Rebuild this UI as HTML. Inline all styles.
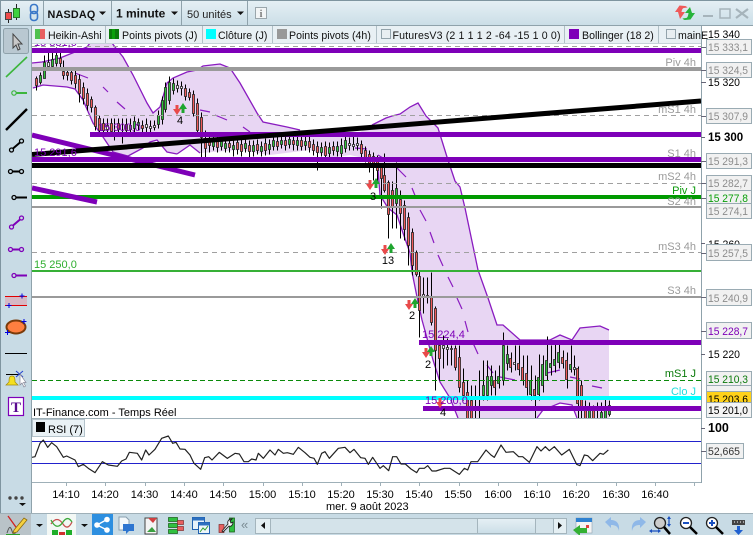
<!DOCTYPE html>
<html><head><meta charset="utf-8"><style>
html,body{margin:0;padding:0;background:#fff}
svg{display:block;font-family:"Liberation Sans",sans-serif}
</style></head><body>
<svg width="753" height="535" viewBox="0 0 753 535" xmlns="http://www.w3.org/2000/svg">
<defs>
<linearGradient id="tb" x1="0" y1="0" x2="0" y2="1"><stop offset="0" stop-color="#e9f3f8"/><stop offset="1" stop-color="#c9dee8"/></linearGradient>
<linearGradient id="th" x1="0" y1="0" x2="0" y2="1"><stop offset="0" stop-color="#e6f0f5"/><stop offset="1" stop-color="#cbdee7"/></linearGradient>
<clipPath id="c"><rect x="32" y="43" width="669" height="375"/></clipPath>
<clipPath id="ct"><rect x="32" y="43" width="669" height="439"/></clipPath>
<path id="dn" d="M-1.5-5h3v4h2.5L0 5-4-1h2.500z"/>
<path id="up" d="M-1.500 5h3V1H4L0-5-4 1h2.500z"/>
</defs>
<rect width="753" height="535" fill="#fff"/>
<!-- chart -->
<g clip-path="url(#c)">
<path fill="#e8d6f3" d="M32 63L42 62 60 58 75 52 87 47 90 43 112 43 115 47 123 57 133 75 147 103 153 113 160 107 167 83 173 78 187 72 197 70 203 66 220 64 230 68 240 83 257 113 263 122 287 127 300 130 330 134 360 132 372 125 386 118 392 116 400 114 410 107 418 103 426 116 438 128 447 157 455 181 460 187 465 208 478 270 488 298 497 325 503 325 520 340 550 340 560 335 572 340 580 328 600 326 609 330 609 418 578 418 572 405 560 403 543 410 537 418 458 418 450 398 440 382 433 360 422 320 417 297 412 272 410 253 403 233 397 215 388 208 380 195 378 170 372 160 350 155 330 158 310 150 270 155 240 150 200 153 190 145 177 154 167 152 157 140 150 142 143 148 128 156 113 152 103 137 100 133 93 123 83 100 75 89 67 87 43 85 33 88 32 90z"/>
<path fill="none" stroke="#8a1cc0" stroke-width="1.300" d="M32 63L42 62 60 58 75 52 87 47 90 43M112 43L115 47 123 57 133 75 147 103 153 113 160 107 167 83 173 78 187 72 197 70 203 66 220 64 230 68 240 83 257 113 263 122 287 127 300 130M372 125L386 118 392 116 400 114 410 107 418 103 426 116 438 128 447 157 455 181 460 187 465 208 478 270 488 298 497 325 503 325 520 340 550 340 560 335 572 340 580 328 600 326 609 330M577 418L572 405 560 403 543 410 537 418M458 418L450 398 440 382 433 360 422 320 417 297 412 272 410 253 403 233 397 215 388 208 380 195 378 170 372 160M177 154L167 152 157 140 150 142 143 148 128 156 113 152 103 137 100 133 93 123 83 100 75 89 67 87 43 85 33 88M177 154L190 145 200 153"/>
<path fill="none" stroke="#8a1cc0" stroke-width="1.200" d="M75 73L88 78M103 87L108 92M117 102L125 109M200 110L210 112M215 115L227 120M243 127L250 132M355 148L367 149M378 155L383 158M397 168L406 177M412 188L416 198M420 210L426 221M430 232L434 243M438 255L443 266M448 277L453 287M457 298L462 309M465 321L468 332M473 343L478 354M487 365L493 373M500 377L515 380M547 373L560 370M570 377L580 379M592 386L602 388"/>
<g transform="translate(.5 .5)">
<path fill="none" stroke="#000" d="M36 76V90M40 72V84M44 55V78M48 52V68M52 50V68M56 47V66M60 50V70M63 60V79M67 68V80M71 68V84M75 70V88M79 74V102M83 82V104M87 88V110M91 96V112M95 105V130M99 115V135M103 118V135M107 118V136M111 118V136M114 118V140M118 118V136M122 118V143M126 118V136M130 118V136M134 116V132M138 118V130M142 120V132M146 118V134M150 120V132M154 120V130M158 110V128M162 96V124M165 82V112M169 76V104M173 78V94M177 80V92M181 81V95M185 84V100M189 88V100M193 90V116M197 98V134M201 112V158M205 130V157M209 134V152M213 136V150M217 136V152M221 137V150M225 138V152M229 138V152M233 140V156M237 138V154M241 138V156M245 138V152M249 140V158M253 140V156M257 139V154M261 141V156M265 138V155M269 139V154M273 135V150M277 136V150M281 135V148M285 135V150M289 134V148M293 135V150M297 135V150M301 135V150M305 136V150M309 136V152M313 139V155M317 141V170M321 142V156M325 141V160M329 142V158M333 141V155M337 141V156M341 138V158M345 136V152M349 137V150M353 135V150M357 137V150M361 140V158M365 146V162M369 150V172M373 152V180M377 155V182M381 163V208M384 153V192M388 180V238M392 181V228M396 162V228M400 190V238M404 200V240M408 212V265M412 228V275M416 250V276M419 270V337M423 277V313M427 277V303M431 272V325M435 306V390M439 340V380M443 335V368M447 338V365M451 345V365M455 345V370M459 345V392M463 368V400M467 380V418M471 385V418M475 385V418M479 370V418M483 360V400M487 360V400M491 365V395M495 370V395M499 365V388M503 332V385M507 345V370M511 352V372M515 345V370M519 345V375M523 355V385M527 355V395M531 365V400M535 375V418M539 354V400M543 355V392M547 336V380M551 345V375M555 342V372M559 340V368M563 350V368M567 352V388M571 345V372M574 355V375M578 366V418M581 380V418M585 400V418M589 402V418M593 405V418M597 402V418M601 402V418M605 398V418M609 400V416"/>
<path fill="#f05a5a" stroke="#222" stroke-width=".8" d="M35 78h2v7h-2zM59 58h2v5h-2zM62 71h2v4h-2zM66 72h2v3h-2zM70 72h2v8h-2zM74 75h2v8h-2zM78 79h2v14h-2zM82 87h2v11h-2zM86 93h2v12h-2zM90 99h2v8h-2zM94 107h2v19h-2zM98 118h2v12h-2zM102 123h2v7h-2zM110 123h2v8h-2zM117 123h2v6h-2zM125 124h2v6h-2zM141 125h2v3h-2zM184 88h2v8h-2zM188 92h2v5h-2zM192 94h2v19h-2zM196 103h2v27h-2zM200 117h2v20h-2zM204 138h2v10h-2zM208 140h2v5h-2zM216 140h2v7h-2zM228 143h2v4h-2zM236 142h2v7h-2zM240 144h2v7h-2zM248 145h2v6h-2zM256 144h2v6h-2zM264 143h2v7h-2zM276 141h2v5h-2zM284 140h2v5h-2zM292 140h2v4h-2zM300 140h2v6h-2zM308 141h2v6h-2zM312 144h2v6h-2zM316 146h2v6h-2zM324 146h2v9h-2zM332 146h2v4h-2zM360 144h2v9h-2zM364 150h2v7h-2zM368 154h2v9h-2zM372 156h2v9h-2zM376 160h2v10h-2zM380 165h2v13h-2zM383 175h2v15h-2zM387 182h2v32h-2zM391 190h2v16h-2zM399 199h2v14h-2zM403 205h2v24h-2zM407 217h2v28h-2zM411 232h2v33h-2zM415 252h2v22h-2zM418 276h2v34h-2zM430 296h2v26h-2zM434 308h2v42h-2zM438 345h2v13h-2zM454 348h2v19h-2zM458 357h2v30h-2zM462 382h2v13h-2zM466 392h2v26h-2zM470 400h2v18h-2zM493 380h2v7h-2zM509 358h2v9h-2zM517 363h2v6h-2zM521 367h2v13h-2zM525 373h2v14h-2zM533 389h2v6h-2zM561 357h2v6h-2zM565 360h2v19h-2zM576 368h2v35h-2zM580 385h2v22h-2zM584 406h2v12h-2zM592 408h2v10h-2z"/>
<path fill="#2fc03a" stroke="#222" stroke-width=".8" d="M39 75h2v7h-2zM43 62h2v16h-2zM51 59h2v7h-2zM55 55h2v8h-2zM133 121h2v7h-2zM137 122h2v3h-2zM157 115h2v9h-2zM161 100h2v19h-2zM164 87h2v22h-2zM168 82h2v18h-2zM172 83h2v7h-2zM212 141h2v5h-2zM220 141h2v5h-2zM224 143h2v5h-2zM232 145h2v4h-2zM244 143h2v5h-2zM252 145h2v6h-2zM260 146h2v5h-2zM268 144h2v5h-2zM272 140h2v6h-2zM280 140h2v4h-2zM288 139h2v5h-2zM296 140h2v5h-2zM304 141h2v4h-2zM320 147h2v5h-2zM328 147h2v6h-2zM336 146h2v5h-2zM340 145h2v8h-2zM344 140h2v8h-2zM395 188h2v15h-2zM482 385h2v10h-2zM486 376h2v19h-2zM490 376h2v9h-2zM497 376h2v7h-2zM502 345h2v35h-2zM506 354h2v9h-2zM529 380h2v14h-2zM537 377h2v17h-2zM541 364h2v21h-2zM545 360h2v15h-2zM549 363h2v4h-2zM553 359h2v6h-2zM557 352h2v10h-2zM569 364h2v5h-2zM588 410h2v8h-2zM600 412h2v6h-2zM604 410h2v8h-2zM608 405h2v9h-2z"/>
<path fill="#f4f0f6" stroke="#222" stroke-width=".8" d="M47 62h2v4h-2zM106 125h2v4h-2zM129 125h2v4h-2zM145 124h2v3h-2zM149 126h2v2h-2zM153 125h2v2h-2zM176 85h2v3h-2zM180 86h2v2h-2zM348 143h2v2h-2zM352 144h2v2h-2zM356 143h2v2h-2zM422 294h2v2h-2zM426 295h2v2h-2zM442 345h2v3h-2zM446 347h2v2h-2zM450 348h2v1h-2zM513 362h2v2h-2zM573 367h2v2h-2z"/>
</g>
<!-- dashed -->
<path stroke="#a0a0a0" stroke-width="1" stroke-dasharray="5 4" fill="none" d="M32 46.500H701M32 115.500H701M32 183.500H701M32 252.500H701"/>
<path stroke="#0a8a0a" stroke-width="1" stroke-dasharray="5 3" fill="none" d="M32 380.500H701"/>
<!-- solid lines -->
<rect x="32" y="67" width="669" height="4" fill="#9a9a9a"/>
<rect x="32" y="206" width="669" height="2" fill="#9a9a9a"/>
<rect x="32" y="296" width="669" height="2" fill="#9a9a9a"/>
<rect x="32" y="270" width="669" height="2" fill="#36b036"/>
<rect x="32" y="195" width="669" height="4" fill="#009a00"/>
<path stroke="#7e00b8" stroke-width="5" d="M32 135L195 175M32 188L97 202"/>
<rect x="32" y="48" width="669" height="5" fill="#7e00b8"/>
<rect x="90" y="132" width="611" height="5" fill="#7e00b8"/>
<rect x="32" y="157" width="669" height="5" fill="#7e00b8"/>
<path stroke="#000" stroke-width="5" d="M32 154.500L701 101"/>
<rect x="32" y="163" width="669" height="5" fill="#000"/>
<rect x="419" y="340" width="282" height="5" fill="#7e00b8"/>
<rect x="32" y="396" width="669" height="4" fill="#00ffff"/>
<rect x="423" y="406" width="278" height="5" fill="#7e00b8"/>
<!-- signals -->
<g fill="#e84a4a"><use href="#dn" x="177" y="110"/><use href="#dn" x="370" y="185"/><use href="#dn" x="385" y="250"/><use href="#dn" x="409" y="305"/><use href="#dn" x="426" y="353"/><use href="#dn" x="440" y="403"/></g>
<g fill="#1fa52f"><use href="#up" x="183" y="108"/><use href="#up" x="376" y="183"/><use href="#up" x="391" y="248"/><use href="#up" x="415" y="303"/><use href="#up" x="431" y="351"/></g>
<g font-size="11" fill="#000" text-anchor="middle"><text x="180" y="124">4</text><text x="373" y="200">3</text><text x="388" y="264">13</text><text x="412" y="319">2</text><text x="428" y="368">2</text><text x="443" y="416">4</text></g>
<g font-size="11" fill="#7e00b8"><text x="34" y="46">15 331,0</text><text x="98" y="131">15 300,0</text><text x="34" y="156">15 291,6</text><text x="422" y="338">15 224,4</text><text x="425" y="404">15 200,0</text></g>
<text x="34" y="268" font-size="11" fill="#2fae2f">15 250,0</text>
<g font-size="11" fill="#9a9a9a" text-anchor="end"><text x="696" y="66">Piv 4h</text><text x="696" y="113">mS1 4h</text><text x="696" y="157">S1 4h</text><text x="696" y="180">mS2 4h</text><text x="696" y="205">S2 4h</text><text x="696" y="250">mS3 4h</text><text x="696" y="294">S3 4h</text></g>
<text x="696" y="194" font-size="11" fill="#0a9a0a" text-anchor="end">Piv J</text>
<text x="696" y="377" font-size="11" fill="#0a7a0a" text-anchor="end">mS1 J</text>
<text x="696" y="395" font-size="11" fill="#22dddd" text-anchor="end">Clo J</text>
</g>
<text x="33" y="416" font-size="11" fill="#000">IT-Finance.com - Temps Réel</text>
<!-- RSI -->
<rect x="32" y="418" width="669" height="1" fill="#9fb0b8"/>
<rect x="32" y="482" width="669" height="1" fill="#9fb0b8"/>
<rect x="32" y="441" width="669" height="1" fill="#2222cc"/>
<rect x="32" y="463" width="669" height="1" fill="#2222cc"/>
<g clip-path="url(#ct)" fill="none" stroke="#222" stroke-linejoin="round">
<path transform="translate(0 405) scale(.33333)" stroke-width="3.600" d="M96 157L105 155 120 115 130 105 143 127 155 113 170 125 190 157 200 153 225 165 235 185 250 178 265 190 285 203 307 170 325 180 352 184 365 168 378 162 388 142 412 145 425 165 437 135 447 150 465 133 485 100 505 93 518 115 528 112 540 132 555 133 570 150 582 175 602 193 614 158 626 155 636 165 658 142 682 160 705 145 718 147 732 170 745 170 755 162 768 165 775 145 790 160 810 135 825 150 835 133 850 145 862 143 880 148 895 127 915 143 930 157 942 160 952 178 965 145 975 140 988 160 1015 130 1035 127 1050 143 1062 133 1082 158 1095 160 1105 178 1118 157 1128 172"/>
<path transform="translate(376 405) scale(.33333)" stroke-width="3.600" d="M0 172L12 190 22 182 38 197 50 155 62 155 75 177 88 177 105 192 122 203 130 190 145 190 155 182 168 198 180 198 205 190 222 190 250 208 265 190 275 195 285 170 305 170 330 135 345 150 355 157 375 120 390 142 412 140 428 155 440 155 460 172 483 125 495 138 508 125 520 137 535 125 557 150 580 133 602 178 612 182 625 150 635 152 650 167 672 145 682 148 697 135"/>
</g>
<rect x="32.500" y="419.500" width="52" height="17" fill="#e9f1f5" stroke="#b4c3cb"/>
<rect x="36" y="422" width="9" height="10" fill="#000"/>
<text x="48" y="433" font-size="11" fill="#000">RSI (7)</text>
<!-- time axis -->
<path stroke="#9fb0b8" fill="none" d="M66.500 482v4M105.500 482v4M145.500 482v4M184.500 482v4M223.500 482v4M263.500 482v4M302.500 482v4M341.500 482v4M380.500 482v4M419.500 482v4M459.500 482v4M498.500 482v4M537.500 482v4M576.500 482v4M616.500 482v4M655.500 482v4M694.500 482v4"/>
<g font-size="11" fill="#000" text-anchor="middle"><text x="66" y="498">14:10</text><text x="105" y="498">14:20</text><text x="144.500" y="498">14:30</text><text x="184" y="498">14:40</text><text x="223" y="498">14:50</text><text x="262.500" y="498">15:00</text><text x="302" y="498">15:10</text><text x="341" y="498">15:20</text><text x="380" y="498">15:30</text><text x="419" y="498">15:40</text><text x="458" y="498">15:50</text><text x="498" y="498">16:00</text><text x="537" y="498">16:10</text><text x="576" y="498">16:20</text><text x="616" y="498">16:30</text><text x="655" y="498">16:40</text></g>
<text x="326" y="510" font-size="11" fill="#000">mer. 9 août 2023</text>
<!-- right axis -->
<rect x="701" y="26" width="1" height="457" fill="#8fa2ab"/>
<path stroke="#667" fill="none" d="M701 35.500h4M701 82.500h5M701 137.500h4M701 243.500h4M701 354.500h4M701 428.500h4M701 451.500h5M701 47.500h5M701 70.500h5M701 116.500h5M701 161.500h5M701 183.500h5M701 198.500h5M701 253.500h5M701 297.500h5M701 331.500h5"/>
<g font-size="11" fill="#000"><text x="708" y="38" textLength="32" lengthAdjust="spacingAndGlyphs">15 340</text><text x="708" y="86" textLength="32" lengthAdjust="spacingAndGlyphs">15 320</text><text x="708" y="248" textLength="32" lengthAdjust="spacingAndGlyphs">15 260</text><text x="708" y="358" textLength="32" lengthAdjust="spacingAndGlyphs">15 220</text></g>
<text x="708" y="141" font-size="11.500" font-weight="bold" fill="#000">15 300</text>
<text x="708" y="432" font-size="12.500" font-weight="bold" fill="#000">100</text>
<g fill="#f1f1f1" stroke="#9aabb3"><rect x="706.500" y="39.500" width="45" height="15"/><rect x="706.500" y="62.500" width="45" height="15"/><rect x="706.500" y="108.500" width="45" height="15"/><rect x="706.500" y="153.500" width="45" height="15"/><rect x="706.500" y="175.500" width="45" height="15"/><rect x="706.500" y="190.500" width="45" height="15"/><rect x="706.500" y="203.500" width="45" height="15"/><rect x="706.500" y="244.500" width="45" height="16"/><rect x="706.500" y="289.500" width="45" height="16"/><rect x="706.500" y="322.500" width="45" height="16"/><rect x="706.500" y="371.500" width="45" height="15"/><rect x="706.500" y="385.500" width="45" height="8"/></g>
<rect x="706.500" y="391.500" width="45" height="11" fill="#ffd21a" stroke="#9aabb3"/>
<rect x="706.500" y="402.500" width="45" height="15" fill="#f4f4f4" stroke="#9aabb3"/>
<rect x="706.500" y="443.500" width="37" height="15" fill="#f1f1f1" stroke="#9aabb3"/>
<g font-size="11" fill="#8c8c8c"><text x="708" y="51" textLength="40" lengthAdjust="spacingAndGlyphs">15 333,1</text><text x="708" y="74" textLength="40" lengthAdjust="spacingAndGlyphs">15 324,5</text><text x="708" y="120" textLength="40" lengthAdjust="spacingAndGlyphs">15 307,9</text><text x="708" y="165" textLength="40" lengthAdjust="spacingAndGlyphs">15 291,3</text><text x="708" y="187" textLength="40" lengthAdjust="spacingAndGlyphs">15 282,7</text><text x="708" y="215" textLength="40" lengthAdjust="spacingAndGlyphs">15 274,1</text><text x="708" y="257" textLength="40" lengthAdjust="spacingAndGlyphs">15 257,5</text><text x="708" y="302" textLength="40" lengthAdjust="spacingAndGlyphs">15 240,9</text></g>
<text x="708" y="202" font-size="11" fill="#0aa00a" textLength="40" lengthAdjust="spacingAndGlyphs">15 277,8</text>
<text x="708" y="335" font-size="11" fill="#7e00b8" textLength="40" lengthAdjust="spacingAndGlyphs">15 228,7</text>
<text x="708" y="383" font-size="11" fill="#0a7a0a" textLength="40" lengthAdjust="spacingAndGlyphs">15 210,3</text>
<svg x="707" y="392" width="44" height="10"><text x="1" y="11" font-size="11" fill="#000" textLength="40" lengthAdjust="spacingAndGlyphs">15 203,6</text></svg>
<text x="708" y="414" font-size="11" fill="#000" textLength="40" lengthAdjust="spacingAndGlyphs">15 201,0</text>
<text x="708" y="455" font-size="11" fill="#333" textLength="32" lengthAdjust="spacingAndGlyphs">52,665</text>
<!-- top toolbar -->
<rect x="0" y="0" width="753" height="25" fill="url(#th)"/>
<rect x="0" y="0" width="753" height="1" fill="#7f95a0"/>
<rect x="0" y="25" width="753" height="1" fill="#8fa2ab"/>
<path stroke="#8fa2ab" d="M43.500 1V25M111.500 1V25M181.500 1V25M247.500 1V25"/>
<path stroke="#222" d="M8.500 9V23M16.500 4V20"/>
<rect x="5.500" y="12.500" width="6" height="7" fill="#ee4b4b" stroke="#444"/>
<rect x="13.500" y="8.500" width="6" height="9" fill="#3fd23f" stroke="#2a7a2a"/>
<g fill="none" stroke="#3a78c8" stroke-width="1.600"><rect x="30.500" y="4.500" width="7" height="9" rx="3"/><rect x="30.500" y="11.500" width="7" height="9" rx="3"/></g>
<text x="47.500" y="18" font-size="10.800" font-weight="bold" fill="#111" letter-spacing=".2">NASDAQ</text>
<path d="M99 11.500h7l-3.500 3.500z" fill="#111"/>
<text x="116" y="17.500" font-size="12" font-weight="bold" fill="#111">1 minute</text>
<path d="M171 11.500h7l-3.500 3.500z" fill="#111"/>
<text x="187" y="18" font-size="11" fill="#222">50 unités</text>
<path d="M237 11.500h7l-3.500 3.500z" fill="#111"/>
<rect x="255.500" y="7.500" width="11" height="11" fill="#f2f5f6" stroke="#9aa6ac"/>
<text x="261" y="17" font-size="10" font-weight="bold" fill="#777" text-anchor="middle" font-family="Liberation Serif">i</text>
<!-- refresh -->
<path d="M678 12l-3 0 4.500-6.500L685 6c1 0 2 1 2.500 1.500L684 8c-1 0-2 1-2.500 4L685 12 680 19z" fill="#ef5a5a"/>
<path d="M692 13l3 0-4.500 6.500L685 20c-1 0-2-1-2.500-1.500L686 18c1 0 2-1 2.500-5L685 13l5-6z" fill="#27b43a"/>
<rect x="703" y="15" width="10" height="2" fill="#a6b4bb"/>
<rect x="720" y="9" width="10" height="9" fill="none" stroke="#a6b4bb" stroke-width="1.500"/>
<path d="M736 9l12 9M748 9l-12 9" stroke="#a6b4bb" stroke-width="2.200"/>
<!-- legend -->
<rect x="32" y="26" width="669" height="17" fill="#e8f0f4"/>
<rect x="32" y="43" width="669" height="1" fill="#c5d2d8"/>
<path stroke="#b0bfc6" d="M105.500 26V43M202.500 26V43M272.500 26V43M564.500 26V43M658.500 26V43M376.500 26V43"/>
<rect x="35" y="29" width="5" height="10" fill="#4fc04f"/><rect x="40" y="29" width="5" height="10" fill="#e86060"/>
<rect x="109" y="29" width="10" height="10" fill="#0a7a0a"/><rect x="112" y="29" width="3" height="10" fill="#0aa00a"/>
<rect x="206" y="29" width="10" height="10" fill="#00ffff"/>
<rect x="277" y="29" width="10" height="10" fill="#999"/>
<rect x="381.500" y="29.500" width="9" height="9" fill="#e8eef1" stroke="#93a3ab"/>
<rect x="569" y="29" width="10" height="10" fill="#7e00b8"/>
<rect x="666.500" y="29.500" width="9" height="9" fill="#e8eef1" stroke="#93a3ab"/>
<g font-size="10.600" fill="#111"><text x="48" y="39">Heikin-Ashi</text><text x="122" y="39">Points pivots (J)</text><text x="218" y="39">Clôture (J)</text><text x="289" y="39">Points pivots (4h)</text><text x="392.500" y="39" textLength="168">FuturesV3 (2 1 1 1 2 -64 -15 1 0 0)</text><text x="582" y="39">Bollinger (18 2)</text><text x="678" y="39">mainE</text></g>
<rect x="701" y="26" width="52" height="2" fill="#fff"/>
<rect x="701" y="26" width="1" height="20" fill="#8fa2ab"/>
<!-- left toolbar -->
<rect x="0" y="26" width="32" height="487" fill="#c8dbe5"/>
<rect x="0" y="0" width="1" height="535" fill="#7f95a0"/>
<rect x="31" y="26" width="1" height="487" fill="#8fa2ab"/>
<rect x="3.500" y="28.500" width="25" height="25" rx="2" fill="#b9c8d1" stroke="#8fa2ab"/>
<path d="M13 34v14l3-3 2 5 2-1-2-5h4z" fill="#c8c8c8" stroke="#444" stroke-width="1"/>
<path d="M6 77L27 57" stroke="#3cb63c" stroke-width="1.600"/>
<circle cx="14" cy="93" r="2.200" fill="none" stroke="#3cb63c" stroke-width="1.200"/><rect x="16" y="92" width="11" height="2" fill="#3cb63c"/>
<path d="M6 130L27 109" stroke="#000" stroke-width="2.400"/>
<g fill="none" stroke="#000" stroke-width="1.300"><circle cx="11.500" cy="150" r="2"/><circle cx="21.500" cy="141" r="2"/><circle cx="10.500" cy="171.500" r="2"/><circle cx="21.500" cy="171.500" r="2"/><circle cx="14" cy="197.500" r="2"/></g>
<path d="M13 148.500L20 142.500M12.500 171.500H19.500M16 197.500H27" stroke="#000" stroke-width="2"/>
<g fill="none" stroke="#7e00b8" stroke-width="1.300"><circle cx="11.500" cy="227" r="2"/><circle cx="21.500" cy="218" r="2"/><circle cx="10.500" cy="249.500" r="2"/><circle cx="21.500" cy="249.500" r="2"/><circle cx="14" cy="275.500" r="2"/></g>
<path d="M13 225.500L20 219.500M12.500 249.500H19.500M16 275.500H27" stroke="#7e00b8" stroke-width="2"/>
<rect x="5" y="296" width="22" height="9" fill="#d6b8c4"/>
<path d="M5 296.500H27M5 305.500H27" stroke="#e00000"/>
<path d="M19.500 296h5M22 293.500v5M6.500 305.500h5M9 303v5" stroke="#0000e0" stroke-width="1"/>
<ellipse cx="16" cy="327" rx="9.500" ry="6.500" fill="#ff7f40" stroke="#7a3b0a" stroke-width="2"/>
<path d="M21.500 321.500h5M24 319v5M5 332.500h5M7.500 330v5" stroke="#0000e0" stroke-width="1"/>
<rect x="5" y="353" width="22" height="1" fill="#000"/>
<path d="M6 374.500H20" stroke="#000"/>
<path d="M12 376c-3 0-3 3-3 6l-3 3h12l-3-3c0-3 0-6-3-6z" fill="#f5e020" stroke="#a08a10" stroke-width=".7"/>
<path d="M16 371l7 6M23 371l-7 6" stroke="#2040d0"/>
<path d="M20 374v11l2-2 2 4 1.500-1-2-3.500h2.500z" fill="#fff" stroke="#889" stroke-width=".7"/>
<rect x="8.500" y="397.500" width="15" height="18" fill="#fff" stroke="#7e00b8" stroke-width="1.200"/>
<text x="16" y="412" font-size="15" font-weight="bold" fill="#5a0a90" text-anchor="middle" font-family="Liberation Serif">T</text>
<g fill="#444"><circle cx="10" cy="498" r="1.700"/><circle cx="16" cy="498" r="1.700"/><circle cx="22" cy="498" r="1.700"/></g>
<path d="M19 503h7l-3.500 3z" fill="#111"/>
<!-- bottom toolbar -->
<rect x="0" y="513" width="753" height="22" fill="#c8dbe5"/>
<rect x="0" y="513" width="753" height="1" fill="#9fb0b8"/>
<rect x="0" y="514" width="31" height="21" fill="#b9c3c8"/>
<path d="M8 516L18 530" stroke="#d02020" stroke-width="1.300"/><path d="M7 533c2-6 3-8 5-2s3 3 4-1" stroke="#555" fill="none"/>
<path d="M14 530l10-12 3 2-10 12-4 1z" fill="#f5d040" stroke="#8a6a10" stroke-width=".8"/>
<rect x="6" y="534" width="14" height="1" fill="#2aa02a"/>
<path d="M36 524h7l-3.500 3z" fill="#111"/>
<rect x="47" y="514" width="29" height="21" fill="#f3f8f5" />
<path d="M51 524c4-6 8-6 12 0s7 2 9-2" fill="none" stroke="#c85050" stroke-width="1.300"/><path d="M51 520c4 8 8 8 12 2s7-3 9 0" fill="none" stroke="#3aa83a" stroke-width="1.300"/>
<path d="M52 530h6v5h-6zM66 530h6v5h-6z" fill="#1fae2a"/><path d="M59 532h6v3h-6z" fill="#d03030"/>
<path d="M81 524h7l-3.500 3z" fill="#111"/>
<rect x="92" y="514" width="21" height="21" fill="#2d8fe0"/>
<g fill="#fff"><circle cx="97" cy="525" r="2.800"/><circle cx="107" cy="519.500" r="2.800"/><circle cx="107" cy="530" r="2.800"/></g><path d="M97 525L107 519.500M97 525L107 530" stroke="#fff" stroke-width="1.300"/>
<path d="M119 517h7l3 3v10h-10z" fill="#f3f8fb" stroke="#8aa0b0"/>
<path d="M123 524h11v7h-5l-3 3v-3h-3z" fill="#2d75d0"/>
<path d="M145 518h12v16h-12z" fill="#f4f4f4" stroke="#444"/><path d="M148 518h9l-4 5z" fill="#d04040"/><path d="M147 532l5-5 4 5z" fill="#3aa040"/>
<g stroke="#145a14" stroke-width=".7"><rect x="168.500" y="517.500" width="9" height="4" fill="#30c040"/><rect x="168.500" y="523.500" width="9" height="4" fill="#30c040"/><rect x="168.500" y="529.500" width="9" height="4" fill="#30c040"/></g>
<g stroke="#803030" stroke-width=".7"><rect x="177.500" y="520.500" width="6" height="4" fill="#e86060"/><rect x="177.500" y="526.500" width="6" height="4" fill="#e86060"/></g>
<rect x="192.500" y="517.500" width="12" height="12" fill="#e8f2fa" stroke="#2060b0"/><rect x="192.500" y="517.500" width="12" height="3" fill="#2d70c0"/>
<rect x="198.500" y="522.500" width="11" height="11" fill="#eef6fb" stroke="#2060b0"/><rect x="198.500" y="522.500" width="11" height="3" fill="#2d70c0"/>
<path d="M200 532l3-4 2 2 3-4" stroke="#30a030" fill="none"/>
<path d="M229.500 518h5v14h-5z" fill="#30c040" stroke="#145a14" stroke-width=".7"/><path d="M219 524.500h5v8h-5z" fill="#e86060" stroke="#803030" stroke-width=".7"/>
<path d="M222 531l6-7c-1-3 1-5 4-5l-2 2 1 2 2-1c0 3-2 5-4 4l-6 6z" fill="#fff" stroke="#222" stroke-width=".9"/>
<text x="241" y="529" font-size="13" fill="#7a8a92">«</text>
<rect x="255.500" y="518.500" width="311" height="15" fill="#d4e3ea" stroke="#a4b5bd"/>
<rect x="255.500" y="518.500" width="15" height="15" fill="#e4eff3" stroke="#a4b5bd"/>
<path d="M265 522v7l-4-3.500z" fill="#111"/>
<rect x="477.500" y="518.500" width="58" height="15" fill="url(#th)" stroke="#a4b5bd"/>
<rect x="553.500" y="518.500" width="13" height="15" fill="#e4eff3" stroke="#a4b5bd"/>
<path d="M558 522v7l4-3.500z" fill="#111"/>
<rect x="576" y="518" width="16" height="15" fill="#f4f4f4" stroke="#90a0b0" stroke-width=".6"/><rect x="576" y="518" width="16" height="4" fill="#2d80d0"/>
<path d="M586 525h3v3h-3z" fill="#e04040"/>
<path d="M573 530l7-5v3h7v5h-7v3z" fill="#33b033"/>
<path d="M605 522l6-5v3c5 0 9 3 8 11-1-5-4-6-8-6v3z" fill="#8fb8e8"/>
<path d="M646 522l-6-5v3c-5 0-9 3-8 11 1-5 4-6 8-6v3z" fill="#8fb8e8"/>
<circle cx="660" cy="523" r="5.500" fill="#ccc" stroke="#222" stroke-width="1.300"/><path d="M664 527l6 7" stroke="#000" stroke-width="2.500"/>
<path d="M669 518v7M651 531h8" stroke="#1a50c0" stroke-width="1.200"/><path d="M669 516l-2 3h4zM669 527l-2-3h4zM649 531l3-2v4zM661 531l-3-2v4z" fill="#1a50c0"/>
<circle cx="686" cy="523" r="5.500" fill="#fff" stroke="#222" stroke-width="1.300"/><path d="M690 527l7 7" stroke="#000" stroke-width="2.500"/><path d="M683 523h6" stroke="#1a50c0" stroke-width="2"/>
<circle cx="712" cy="523" r="5.500" fill="#fff" stroke="#222" stroke-width="1.300"/><path d="M716 527l7 7" stroke="#000" stroke-width="2.500"/><path d="M709 523h6M712 520v6" stroke="#1a50c0" stroke-width="2"/>
<rect x="732" y="520" width="13" height="5" fill="#444"/><path d="M734 522h1M737 522h1M740 522h1M743 522h1" stroke="#fff"/>
<path d="M737 526h3v4h3l-4.500 5-4.500-5h3z" fill="#2060d0"/>
</svg>
</body></html>
